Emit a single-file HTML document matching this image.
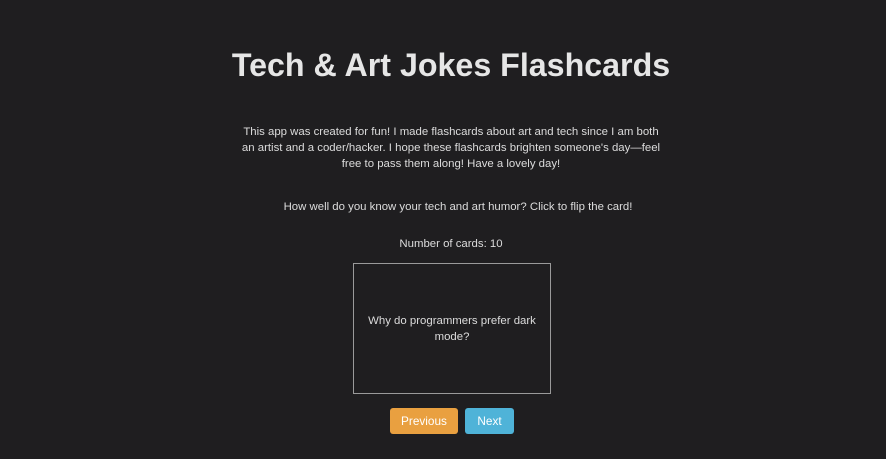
<!DOCTYPE html>
<html><head><meta charset="utf-8"><style>
html,body{margin:0;padding:0;}
body{width:886px;height:459px;background:#1f1e20;color:#dcdcdc;font-family:"Liberation Sans",sans-serif;position:relative;overflow:hidden;}
.a{position:absolute;left:8px;width:886px;text-align:center;}
h1{margin:0;font-size:32.2px;font-weight:bold;color:#e6e6e6;}
p{margin:0;font-size:11.4px;line-height:16px;white-space:nowrap;}
.card{position:absolute;left:353px;top:263px;width:198px;height:131px;border:1px solid #9a9a9a;box-sizing:border-box;display:flex;align-items:center;justify-content:center;text-align:center;font-size:11.4px;line-height:16px;padding:0 12px;}
.btn{position:absolute;top:408px;height:26px;border-radius:3px;color:#fff;font-size:11.8px;line-height:26px;text-align:center;}
</style></head><body>
<div class="a" style="top:47px"><h1>Tech &amp; Art Jokes Flashcards</h1></div>
<div class="a" style="top:124px"><p>This app was created for fun! I made flashcards about art and tech since I am both<br>an artist and a coder/hacker. I hope these flashcards brighten someone's day—feel<br>free to pass them along! Have a lovely day!</p></div>
<div class="a" style="top:199px;left:15px"><p>How well do you know your tech and art humor? Click to flip the card!</p></div>
<div class="a" style="top:236px"><p>Number of cards: 10</p></div>
<div class="card">Why do programmers prefer dark mode?</div>
<div class="btn" style="left:390px;width:68px;background:#e9a040">Previous</div>
<div class="btn" style="left:465px;width:49px;background:#4fb3d8">Next</div>
</body></html>
